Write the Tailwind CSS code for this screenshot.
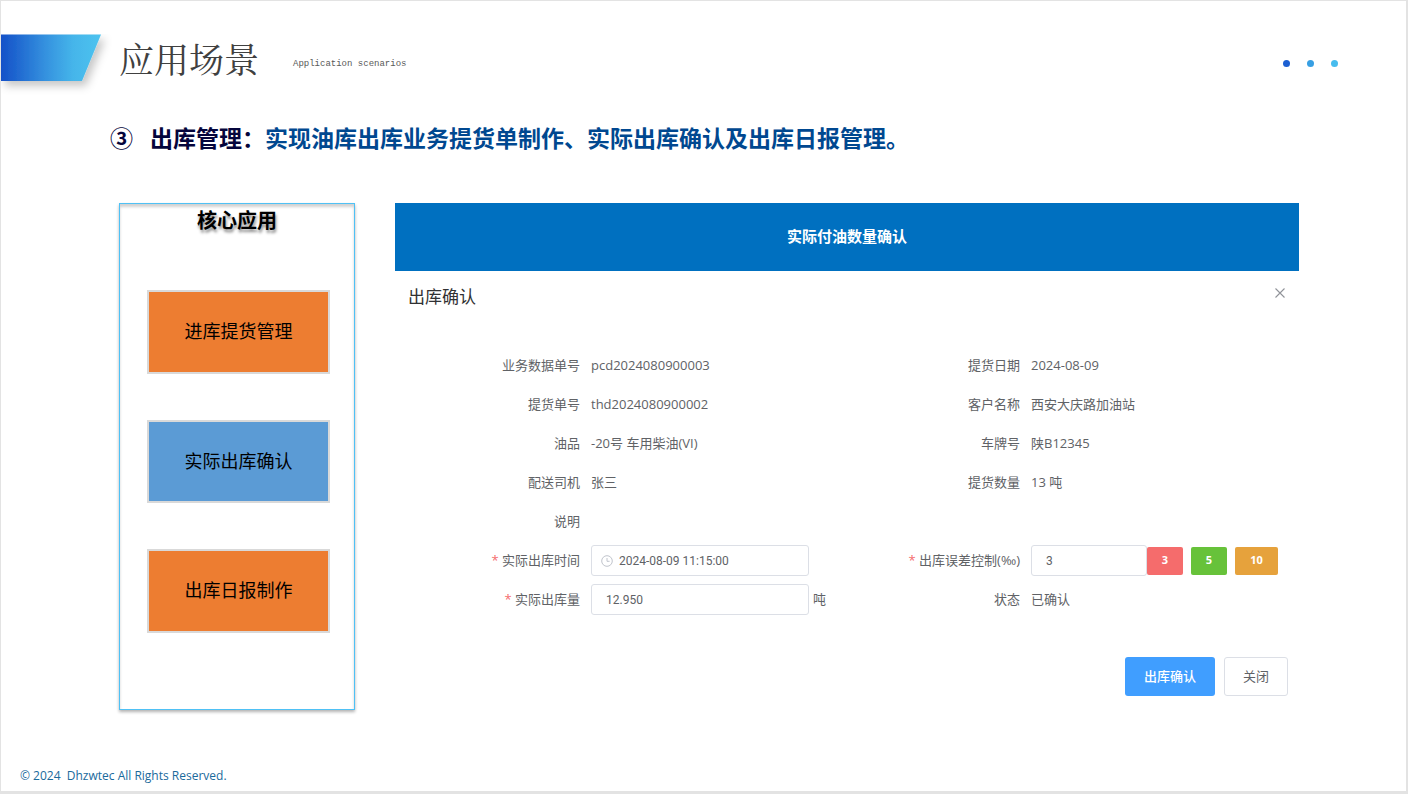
<!DOCTYPE html>
<html lang="zh-CN">
<head>
<meta charset="utf-8">
<title>应用场景</title>
<script src="https://cdn.jsdelivr.net/npm/@tailwindcss/browser@4"></script>
</head>
<body class="bg-[#e3e3e3]">
<div class="flex min-h-screen flex-col border-t border-r-2 border-b-3 border-l border-[#e3e3e3] bg-white font-['Open_Sans','Noto_Sans_CJK_SC',sans-serif] text-[#606266]">
  <header class="flex h-[122px] items-start">
    <svg class="mt-[33px] h-[62px] w-[118px] shrink-0" viewBox="0 0 118 62" aria-hidden="true">
      <defs>
        <linearGradient id="ribbon" x1="0" x2="1" y1="0" y2="0">
          <stop offset="0" stop-color="#1450c8"/>
          <stop offset="0.45" stop-color="#3592df"/>
          <stop offset="0.72" stop-color="#45b5ea"/>
          <stop offset="1" stop-color="#4dc3ef"/>
        </linearGradient>
        <filter id="shade" x="-20%" y="-20%" width="150%" height="160%">
          <feDropShadow dx="4" dy="5" stdDeviation="4.5" flood-color="#000" flood-opacity="0.22"/>
        </filter>
      </defs>
      <path d="M0 .5H100L81 47H0Z" fill="url(#ribbon)" filter="url(#shade)"/>
    </svg>
    <h1 class="mt-8 font-['Noto_Serif_CJK_SC','Noto_Sans_CJK_SC',serif] text-[35px] leading-[50px] font-normal text-[#404040]">应用场景</h1>
    <p class="mt-[55px] ml-[34px] font-['Liberation_Mono',monospace] text-[9px] leading-4 text-[#595959]">Application scenarios</p>
    <div class="mt-[59px] mr-[68px] ml-auto flex gap-[17px]">
      <span class="size-[7px] rounded-full bg-[#1c5fd2]"></span>
      <span class="size-[7px] rounded-full bg-[#379fe3]"></span>
      <span class="size-[7px] rounded-full bg-[#47bcee]"></span>
    </div>
  </header>

  <h2 class="flex h-20 items-start pl-[109px] font-['Noto_Sans_CJK_SC',sans-serif] text-[23px] leading-7 font-bold text-[#004890]">
    <span class="w-10 text-[#05053c]">③</span>
    <span><span class="text-[#05053c]">出库管理：</span>实现油库出库业务提货单制作、实际出库确认及出库日报管理。</span>
  </h2>

  <main class="flex items-start pr-[107px] pl-[118px]">
    <nav class="flex h-[507px] w-[236px] shrink-0 flex-col border border-[#4fc1f5] font-['Noto_Sans_CJK_SC',sans-serif] text-black shadow-[0_2px_3px_rgba(0,0,0,0.3),inset_0_3px_3px_rgba(0,0,0,0.18)]">
      <h3 class="mt-px mb-[55px] text-center text-xl leading-[30px] font-bold [text-shadow:1px_3px_3px_rgba(0,0,0,0.45)]">核心应用</h3>
      <div class="flex flex-col gap-[46px] pl-[27px]">
        <button class="h-[84px] w-[183px] border-2 border-[#d9d9d9] bg-[#ed7d31] pb-1 text-lg">进库提货管理</button>
        <button class="h-[83px] w-[183px] border-2 border-[#d9d9d9] bg-[#5b9bd5] pb-1 text-lg">实际出库确认</button>
        <button class="h-[84px] w-[183px] border-2 border-[#d9d9d9] bg-[#ed7d31] pb-1 text-lg">出库日报制作</button>
      </div>
    </nav>

    <section class="ml-10 flex-1">
      <h3 class="flex h-[68px] items-center justify-center bg-[#0070c0] pb-0.5 text-[15px] font-bold text-white">实际付油数量确认</h3>
      <div class="flex h-[75px] items-start justify-between pr-3 pl-[13px]">
        <h4 class="mt-3.5 text-[17px] leading-6 font-normal text-[#303133]">出库确认</h4>
        <button class="mt-[15px] p-0.5" aria-label="关闭对话框">
          <svg class="size-[10px]" viewBox="0 0 10 10" fill="none" stroke="#909399" stroke-width="1.1"><path d="M.5 .5l9 9M9.5 .5l-9 9"/></svg>
        </button>
      </div>

      <form>
        <div class="grid auto-rows-[39px] grid-cols-2 items-center pr-6 text-[13px]">
          <div class="flex"><span class="w-[185px] text-right">业务数据单号</span><span class="ml-[11px]">pcd2024080900003</span></div>
          <div class="flex"><span class="w-[185px] text-right">提货日期</span><span class="ml-[11px]">2024-08-09</span></div>
          <div class="flex"><span class="w-[185px] text-right">提货单号</span><span class="ml-[11px]">thd2024080900002</span></div>
          <div class="flex"><span class="w-[185px] text-right">客户名称</span><span class="ml-[11px]">西安大庆路加油站</span></div>
          <div class="flex"><span class="w-[185px] text-right">油品</span><span class="ml-[11px]">-20号 车用柴油(VI)</span></div>
          <div class="flex"><span class="w-[185px] text-right">车牌号</span><span class="ml-[11px]">陕B12345</span></div>
          <div class="flex"><span class="w-[185px] text-right">配送司机</span><span class="ml-[11px]">张三</span></div>
          <div class="flex"><span class="w-[185px] text-right">提货数量</span><span class="ml-[11px]">13 吨</span></div>
          <div class="col-span-2 flex"><span class="w-[185px] text-right">说明</span></div>

          <div class="flex items-center">
            <label for="out-time" class="w-[185px] text-right"><span class="text-[#f56c6c]">* </span>实际出库时间</label>
            <span class="ml-[11px] flex h-[31px] w-[218px] items-center rounded-[3px] border border-[#dcdfe6] pl-[9px]">
              <svg class="size-3 shrink-0" viewBox="0 0 12 12" fill="none" stroke="#c0c4cc" aria-hidden="true"><circle cx="6" cy="6" r="5.3"/><path d="M6 3v3.3h2.6"/></svg>
              <input id="out-time" value="2024-08-09 11:15:00" class="ml-1.5 w-full font-[Roboto,sans-serif] text-xs outline-none">
            </span>
          </div>
          <div class="flex items-center">
            <label for="tolerance" class="w-[185px] shrink-0 text-right whitespace-nowrap"><span class="text-[#f56c6c]">* </span>出库误差控制(‰)</label>
            <input id="tolerance" value="3" class="ml-[11px] h-[31px] w-[116px] shrink-0 rounded-[3px] border border-[#dcdfe6] pl-3.5 font-[Roboto,sans-serif] text-xs outline-none">
            <button type="button" class="h-7 w-9 shrink-0 rounded-[2px] bg-[#f56c6c] text-[11px] font-bold text-white">3</button>
            <button type="button" class="ml-2 h-7 w-9 shrink-0 rounded-[2px] bg-[#67c23a] text-[11px] font-bold text-white">5</button>
            <button type="button" class="ml-2 h-7 w-[43px] shrink-0 rounded-[2px] bg-[#e6a23c] text-[11px] font-bold text-white">10</button>
          </div>
          <div class="flex items-center">
            <label for="out-qty" class="w-[185px] text-right"><span class="text-[#f56c6c]">* </span>实际出库量</label>
            <input id="out-qty" value="12.950" class="ml-[11px] h-[31px] w-[218px] rounded-[3px] border border-[#dcdfe6] pl-3.5 font-[Roboto,sans-serif] text-xs outline-none">
            <span class="ml-1">吨</span>
          </div>
          <div class="flex"><span class="w-[185px] text-right">状态</span><span class="ml-[11px]">已确认</span></div>
        </div>
        <div class="mt-[38px] flex justify-end gap-[9px] pr-[11px] text-[13px]">
          <button type="button" class="h-[39px] w-[90px] rounded-[3px] bg-[#409eff] font-medium text-white">出库确认</button>
          <button type="button" class="h-[39px] w-16 rounded-[3px] border border-[#dcdfe6]">关闭</button>
        </div>
      </form>
    </section>
  </main>

  <footer class="mt-auto mb-[5px] pl-[19px] text-xs leading-5 whitespace-pre text-[#1a6a9c]">© 2024  Dhzwtec All Rights Reserved.</footer>
</div>
</body>
</html>
